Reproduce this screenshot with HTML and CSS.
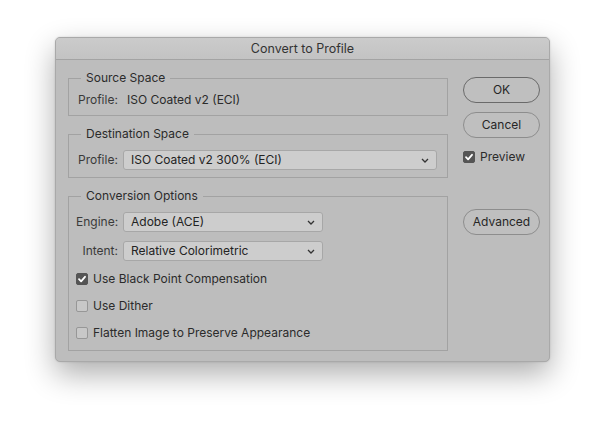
FILE: index.html
```html
<!DOCTYPE html>
<html>
<head>
<meta charset="utf-8">
<link rel="stylesheet" href="styles.css">
</head>
<body>
<div class="stage">
  <div class="dialog">
    <div class="titlebar">Convert to Profile</div>
    <div class="content">
      <div class="left">
        <fieldset class="group source">
          <legend>Source Space</legend>
          <div class="row"><span class="lbl">Profile:</span><span class="val">ISO Coated v2 (ECI)</span></div>
        </fieldset>
        <fieldset class="group dest">
          <legend>Destination Space</legend>
          <div class="row">
            <span class="lbl">Profile:</span>
            <div class="select wide"><span>ISO Coated v2 300% (ECI)</span><svg class="chev" width="8" height="5" viewBox="0 0 8 5"><path d="M1 1 L4 4 L7 1" fill="none" stroke="#333" stroke-width="1.3"/></svg></div>
          </div>
        </fieldset>
        <fieldset class="group conv">
          <legend>Conversion Options</legend>
          <div class="row">
            <span class="lbl w">Engine:</span>
            <div class="select narrow"><span>Adobe (ACE)</span><svg class="chev" width="8" height="5" viewBox="0 0 8 5"><path d="M1 1 L4 4 L7 1" fill="none" stroke="#333" stroke-width="1.3"/></svg></div>
          </div>
          <div class="row r2">
            <span class="lbl w">Intent:</span>
            <div class="select narrow"><span>Relative Colorimetric</span><svg class="chev" width="8" height="5" viewBox="0 0 8 5"><path d="M1 1 L4 4 L7 1" fill="none" stroke="#333" stroke-width="1.3"/></svg></div>
          </div>
          <div class="check first"><span class="box on"><svg width="12" height="12" viewBox="0 0 12 12"><path d="M3 6.2 L5.1 8.3 L9 3.8" fill="none" stroke="#fff" stroke-width="1.8" stroke-linecap="round" stroke-linejoin="round"/></svg></span><span>Use Black Point Compensation</span></div>
          <div class="check"><span class="box"></span><span>Use Dither</span></div>
          <div class="check"><span class="box"></span><span>Flatten Image to Preserve Appearance</span></div>
        </fieldset>
      </div>
      <div class="right">
        <div class="btn default">OK</div>
        <div class="btn">Cancel</div>
        <div class="check preview"><span class="box on"><svg width="12" height="12" viewBox="0 0 12 12"><path d="M3 6.2 L5.1 8.3 L9 3.8" fill="none" stroke="#fff" stroke-width="1.8" stroke-linecap="round" stroke-linejoin="round"/></svg></span><span>Preview</span></div>
        <div class="btn adv">Advanced</div>
      </div>
    </div>
  </div>
</div>
</body>
</html>
```
FILE: styles.css
```css
html, body {
  margin: 0;
  padding: 0;
  background: #ffffff;
}
body {
  font-family: Inter, "Liberation Sans", sans-serif;
  font-size: 12px;
  color: #2b2b2b;
}
.stage {
  width: 606px;
  height: 436px;
  padding: 37px 0 0 55px;
  box-sizing: border-box;
}
.dialog {
  width: 495px;
  height: 325px;
  box-sizing: border-box;
  background: #bdbdbd;
  border: 1px solid #a9a9a9;
  border-radius: 5px;
  box-shadow: 0 12px 30px rgba(0,0,0,0.32), 0 0 2px rgba(0,0,0,0.15);
  overflow: hidden;
}
.titlebar {
  height: 21px;
  line-height: 22px;
  text-align: center;
  background: linear-gradient(#cbcbcb, #c3c3c3);
  border-bottom: 1px solid #a3a3a3;
  color: #333;
  font-size: 12.5px;
}
.content {
  display: flex;
  padding: 10px 0 0 12px;
}
.left {
  width: 380px;
}
.group {
  margin: 0 0 10px 0;
  border: 1px solid #a2a2a2;
  padding: 6px 10px 7px 9px;
}
.group legend {
  padding: 0 5px;
  margin-left: 3px;
  line-height: 16px;
  color: #2b2b2b;
}
.dest { padding-top: 8px; padding-bottom: 7px; }
.conv { padding: 8px 10px 9px 7px; }
.conv legend { margin-left: 5px; }
.row {
  display: flex;
  align-items: center;
  height: 16px;
  line-height: 16px;
}
.dest .row, .conv .row { height: 20px; }
.conv .r2 { margin-top: 9px; }
.lbl {
  color: #3a3a3a;
  width: 40px;
}
.lbl.w {
  width: 42px;
  text-align: right;
}
.source .val { margin-left: 9px; }
.select {
  margin-left: 5px;
  height: 20px;
  box-sizing: border-box;
  background: #cdcdcd;
  border: 1px solid #a7a7a7;
  border-radius: 3px;
  display: flex;
  align-items: center;
  justify-content: space-between;
  padding: 0 7px 0 7px;
  color: #232323;
}
.select.wide { width: 314px; }
.select.narrow { width: 200px; }
.chev { margin-top: 1px; }
.check {
  display: flex;
  align-items: center;
  height: 16px;
  line-height: 16px;
  margin-top: 11px;
}
.check.first { margin-top: 10px; }
.box {
  width: 12px;
  height: 12px;
  box-sizing: border-box;
  border: 1px solid #979797;
  border-radius: 2px;
  background: #c8c8c8;
  margin-right: 5px;
  display: flex;
}
.box.on {
  background: #555555;
  border-color: #555555;
}
.box.on svg { margin: -1px; }
.right {
  margin-left: 15px;
  padding-top: 7px;
  display: flex;
  flex-direction: column;
  align-items: flex-start;
}
.btn {
  width: 77px;
  height: 26px;
  box-sizing: border-box;
  border: 1px solid #8d8d8d;
  border-radius: 13px;
  text-align: center;
  line-height: 24px;
  color: #262626;
  background: #bfbfbf;
}
.btn.default { border-color: #6a6a6a; margin-bottom: 9px; }
.preview { margin-top: 11px; }
.btn.adv { margin-top: 44px; }
```
